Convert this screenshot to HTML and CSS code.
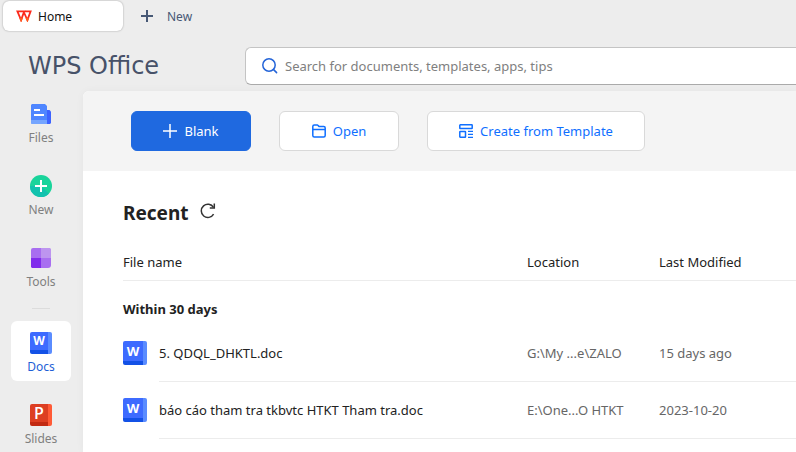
FILE: index.html
```html
<!DOCTYPE html>
<html lang="en">
<head>
    <meta charset="UTF-8">
    <meta name="viewport" content="width=device-width, initial-scale=1.0">
    <title>WPS Office</title>
    <link rel="stylesheet" href="styles.css">
</head>
<body>
    <nav class="tabs">
        <button class="tab tab-active">
            <svg width="16" height="12" viewBox="0 0 16 12" fill="none" stroke="#fb2a1c" stroke-width="1.800">
                <path d="M1.400 1.300h6.800L5.100 10z"/>
                <path d="M9 1.300h5.600L11.400 10 8 2.500"/>
                <path d="M4.100 7.800 5.100 10.200 6.100 7.800M10.400 7.800l1 2.400 1-2.400" stroke="#ff5a1f"/>
            </svg>
            Home
        </button>
        <button class="tab tab-new">
            <svg width="12" height="12" viewBox="0 0 12 12" stroke="#475875" stroke-width="2">
                <path d="M6 0v12M0 6h12"/>
            </svg>
            New
        </button>
    </nav>

    <header class="header">
        <div class="logo">WPS Office</div>
        <label class="search">
            <svg width="16" height="16" viewBox="0 0 16 16" fill="none" stroke="#2464d8" stroke-width="1.500" stroke-linecap="round">
                <circle cx="7" cy="7" r="6.200"/>
                <path d="m11.600 11.600 3 3"/>
            </svg>
            <input type="text" placeholder="Search for documents, templates, apps, tips" aria-label="Search">
        </label>
    </header>

    <div class="layout">
        <nav class="sidebar">
            <a href="#files" class="side-item">
                <svg width="22" height="22" viewBox="0 0 22 22">
                    <path d="M16 7h3.500L21 8.500V20l-1 1h-4z" fill="#3d63ff"/>
                    <path d="M2 1h13l2 2v18H2l-1-1V2z" fill="#4f86ff"/>
                    <path d="M1 17h16v4H2l-1-1z" fill="#75a5ff"/>
                    <path d="M4 7h6M4 12h10" stroke="#fff" stroke-width="2"/>
                </svg>
                Files
            </a>
            <a href="#new" class="side-item">
                <svg width="22" height="22" viewBox="0 0 22 22">
                    <circle cx="11" cy="11" r="11" fill="#19d49b"/>
                    <path d="M0 11h11l7.800 7.800A11 11 0 0 1 0 11z" fill="#12c2ae"/>
                    <path d="M11 5v12M5 11h12" stroke="#fff" stroke-width="2"/>
                </svg>
                New
            </a>
            <a href="#tools" class="side-item">
                <svg width="22" height="22" viewBox="0 0 22 22">
                    <path d="M3 1h8v10H1V3a2 2 0 0 1 2-2z" fill="#a86ef0"/>
                    <path d="M11 1h9l1 1v9H11z" fill="#bd95ef"/>
                    <path d="M1 11h10v10H2l-1-1z" fill="#812cec"/>
                    <path d="M11 11h10v7a3 3 0 0 1-3 3h-7z" fill="#a86ef0"/>
                </svg>
                Tools
            </a>
            <hr class="side-divider">
            <a href="#docs" class="side-item side-item-active">
                <span class="badge badge-doc">W</span>
                Docs
            </a>
            <a href="#slides" class="side-item">
                <span class="badge badge-slides">P</span>
                Slides
            </a>
        </nav>

        <main class="content">
            <div class="actions">
                <button class="btn btn-primary">
                    <svg width="14" height="14" viewBox="0 0 14 14" stroke="currentColor" stroke-width="1.500">
                        <path d="M7 0v14M0 7h14"/>
                    </svg>
                    Blank
                </button>
                <button class="btn">
                    <svg width="14" height="14" viewBox="0 0 14 14" fill="none" stroke="currentColor" stroke-width="1.500" stroke-linejoin="round">
                        <path d="M.800 11.500v-9Q.800 1 2.300 1h3.200l1.700 1.600h4.500q1.500 0 1.500 1.500v7.400q0 1.500-1.500 1.500H2.300Q.800 13 .800 11.500z"/>
                        <path d="M1 5.500h12"/>
                    </svg>
                    Open
                </button>
                <button class="btn btn-wide">
                    <svg width="14" height="14" viewBox="0 0 14 14" fill="none" stroke="currentColor" stroke-width="1.500">
                        <rect x=".800" y=".800" width="12.400" height="3.800" rx=".500"/>
                        <rect x=".800" y="7.500" width="5.700" height="5.700" rx=".500"/>
                        <path d="M9 7.300h5M9 10.300h5M9 13.300h5" stroke-width="1.200"/>
                    </svg>
                    Create from Template
                </button>
            </div>

            <section class="recent">
                <div class="recent-head">
                    <h1>Recent</h1>
                    <button class="refresh" aria-label="Refresh">
                        <svg width="16" height="16" viewBox="0 0 16 16" fill="none" stroke="#333" stroke-width="1.500">
                            <path d="M13.600 11.200A6.600 6.600 0 1 1 13.500 4.400"/>
                            <path d="M14.300.500V5H9.800"/>
                        </svg>
                    </button>
                </div>
                <table class="files">
                    <colgroup>
                        <col class="col-icon">
                        <col class="col-name">
                        <col class="col-location">
                        <col>
                    </colgroup>
                    <thead>
                        <tr>
                            <th colspan="2">File name</th>
                            <th>Location</th>
                            <th>Last Modified</th>
                        </tr>
                    </thead>
                    <tbody>
                        <tr class="group">
                            <th colspan="4">Within 30 days</th>
                        </tr>
                        <tr>
                            <td class="file-icon"><span class="badge badge-doc badge-large">W</span></td>
                            <td class="file-name">5. QDQL_DHKTL.doc</td>
                            <td>G:\My ...e\ZALO</td>
                            <td>15 days ago</td>
                        </tr>
                        <tr>
                            <td class="file-icon"><span class="badge badge-doc badge-large">W</span></td>
                            <td class="file-name">báo cáo tham tra tkbvtc HTKT Tham tra.doc</td>
                            <td>E:\One...O HTKT</td>
                            <td>2023-10-20</td>
                        </tr>
                    </tbody>
                </table>
            </section>
        </main>
    </div>
</body>
</html>
```
FILE: styles.css
```css
* {
    box-sizing: border-box;
}
body {
    margin: 0;
    height: 100vh;
    display: flex;
    flex-direction: column;
    overflow: hidden;
    background-color: #ededed;
    font-family: "Noto Sans", "Open Sans", sans-serif;
    font-size: 13px;
    color: #222;
}
button, input {
    font: inherit;
}
button {
    cursor: pointer;
}
svg {
    display: block;
    flex: none;
}

/* file type icons */
.badge {
    display: block;
    flex: none;
    width: 22px;
    height: 22px;
    padding-right: 4px;
    border-radius: 2px;
    font-family: "Open Sans", sans-serif;
    font-size: 12px;
    font-weight: 700;
    line-height: 18px;
    text-align: center;
    color: #fff;
}
.badge-doc {
    background: linear-gradient(#1351e6, #1351e6) left bottom / 18px 4px no-repeat,
        linear-gradient(to right, #3d6bff 18px, #5a8cff 18px);
}
.badge-slides {
    font-size: 16px;
    font-weight: 600;
    background: linear-gradient(#c22a12, #c22a12) left bottom / 18px 4px no-repeat,
        linear-gradient(to right, #dd3e22 18px, #ff5a36 18px);
}
.badge-large {
    width: 24px;
    height: 24px;
    font-size: 13px;
    line-height: 20px;
    background-size: 20px 4px, auto;
    background-image: linear-gradient(#1351e6, #1351e6),
        linear-gradient(to right, #3d6bff 20px, #5a8cff 20px);
}

/* window tabs */
.tabs {
    display: flex;
    padding: 1px 3px 0;
}
.tab {
    display: flex;
    align-items: center;
    height: 30px;
    border: none;
    background: none;
    font-size: 12px;
}
.tab-active {
    width: 120px;
    gap: 6px;
    padding: 0 13px;
    border-radius: 6px;
    background-color: #fff;
    box-shadow: 0 0 2px rgba(0, 0, 0, 0.35);
    color: #111;
}
.tab-new {
    gap: 14px;
    padding: 0 18px;
    color: #475875;
}

.header {
    display: flex;
    align-items: center;
    padding: 16px 0 6px 28px;
}
.logo {
    flex: none;
    width: 217px;
    font-family: "DejaVu Sans", sans-serif;
    font-size: 24px;
    line-height: 36px;
    color: #475269;
}
.search {
    display: flex;
    flex: 1;
    align-items: center;
    gap: 7px;
    height: 38px;
    padding-left: 16px;
    border: 1px solid #c4c4c4;
    border-bottom-color: #aaa;
    border-right: none;
    border-radius: 6px 0 0 6px;
    background-color: #fff;
}
.search input {
    flex: 1;
    min-width: 0;
    padding: 0;
    border: none;
    outline: none;
    background: none;
}
.search input::placeholder {
    color: #808080;
}

.layout {
    display: flex;
    flex: 1;
    min-height: 0;
}

/* left navigation */
.sidebar {
    display: flex;
    flex: none;
    flex-direction: column;
    align-items: center;
    gap: 12px;
    width: 83px;
    padding: 1px 12px 0 11px;
}
.side-item {
    display: flex;
    flex: none;
    flex-direction: column;
    align-items: center;
    gap: 5px;
    width: 60px;
    height: 60px;
    padding-top: 11px;
    border-radius: 6px;
    font-size: 12px;
    line-height: 16px;
    color: #808080;
    text-decoration: none;
}
.side-item-active {
    background-color: #fff;
    color: #1f5fd6;
}
.side-divider {
    flex: none;
    width: 18px;
    height: 1px;
    margin: 0;
    border: none;
    background-color: #dcdcdc;
}

.content {
    display: flex;
    flex: 1;
    flex-direction: column;
    min-width: 0;
    border-radius: 6px 0 0 0;
    background-color: #fff;
    box-shadow: 0 0 8px rgba(0, 0, 0, 0.04);
}
.actions {
    display: flex;
    flex: none;
    gap: 28px;
    padding: 20px 48px;
    border-radius: 6px 0 0 0;
    background-color: #f4f4f4;
}
.btn {
    display: flex;
    flex: none;
    align-items: center;
    justify-content: center;
    gap: 7px;
    width: 120px;
    height: 40px;
    padding: 0;
    border: 1px solid #d9d9d9;
    border-radius: 6px;
    background-color: #fff;
    color: #0f6fff;
}
.btn-primary {
    border-color: #1f69e0;
    background-color: #1f69e0;
    color: #fff;
}
.btn-wide {
    width: 218px;
}

/* recent files */
.recent {
    padding: 28px 0 0 40px;
}
.recent-head {
    display: flex;
    align-items: center;
    gap: 11px;
    height: 28px;
}
h1 {
    margin: 0;
    font-size: 19px;
    line-height: 28px;
}
.refresh {
    padding: 0 0 4px;
    border: none;
    background: none;
}
.files {
    width: 100%;
    margin-top: 17px;
    table-layout: fixed;
    border-collapse: separate;
    border-spacing: 0;
}
.col-icon {
    width: 36px;
}
.col-name {
    width: 368px;
}
.col-location {
    width: 132px;
}
.files th, .files td {
    height: 57px;
    padding: 0;
    border-bottom: 1px solid #ececec;
    text-align: left;
    white-space: nowrap;
    color: #666;
}
.files thead th {
    height: 37px;
    font-weight: 400;
    color: #222;
}
.files .group th {
    height: 44px;
    padding-top: 12px;
    border: none;
    color: #222;
}
.files .file-icon {
    border-color: transparent;
}
.files .file-name {
    color: #222;
}
```
